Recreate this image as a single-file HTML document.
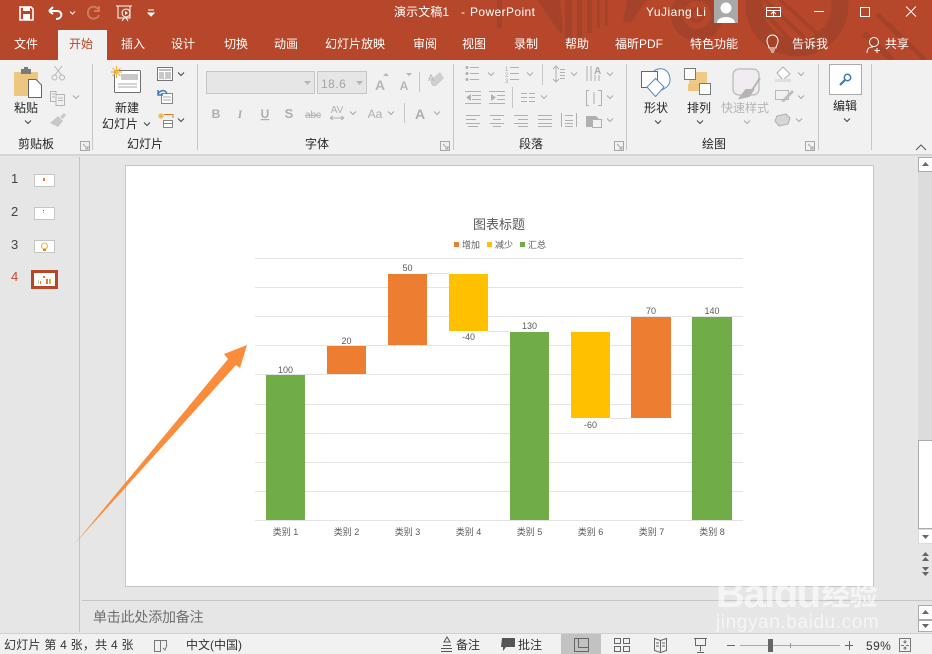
<!DOCTYPE html>
<html lang="zh"><head><meta charset="utf-8"><title>演示文稿1 - PowerPoint</title>
<style>
html,body{margin:0;padding:0;width:932px;height:654px;overflow:hidden;background:#e6e6e6}
svg{display:block}
text{font-family:"Liberation Sans","Noto Sans CJK SC",sans-serif;font-size:12px;fill:#262626}
.w text,text.w{fill:#fff}
.m{text-anchor:middle}
.l{stroke:#b0b0b0;fill:none;stroke-width:1}
.d{stroke:#a5a5a5;fill:none;stroke-width:1}
.c{stroke:#b5b5b5;fill:none;stroke-width:1}
.k{stroke:#444;fill:none;stroke-width:1}
.g{font-size:8px;fill:#595959;text-anchor:middle}
.h{font-size:9px;fill:#595959;text-anchor:middle}
</style></head><body>
<svg width="932" height="654" viewBox="0 0 932 654" xmlns="http://www.w3.org/2000/svg">
<defs>
<g id="cv"><path d="M-3 -1.5L0 1.5L3 -1.5" fill="none" stroke="#aaa" stroke-width="1"/></g>
<g id="cvk"><path d="M-3 -1.5L0 1.5L3 -1.5" fill="none" stroke="#444" stroke-width="1"/></g>
<g id="lau"><path d="M-4.5 -4.5H4.5V4.5H-4.5Z M-2 -2L3 3M3 0V3H0" fill="none" stroke="#a8a8a8" stroke-width="1"/></g>
</defs>
<!-- base -->
<rect width="932" height="654" fill="#e6e6e6"/>
<rect width="932" height="60" fill="#b7472a"/>
<!-- title bar decoration -->
<g fill="#a5432a">
<path d="M497 0h5v28h-5zM537 0h23l3 33h-3zM565 0h7v42h-7zM577 0h5v37h-5zM587 0h5v33h-5zM597 0h3v28h-3zM605 0h3v25h-3zM627 0h20l-16 22h-8z"/>
</g>
<g fill="none" stroke="#a5432a">
<circle cx="697" cy="15" r="20" stroke-width="12"/>
<circle cx="697" cy="15" r="6" stroke-width="4"/>
<circle cx="797" cy="5" r="43" stroke-width="17"/>
<path d="M752 0L800 50M765 0L812 45M780 0L822 38" stroke-width="4"/>
<path d="M864 33L892 60" stroke-width="6"/>
<path d="M877 14L925 60" stroke-width="5"/>
</g>
<!-- ribbon -->
<rect x="0" y="60" width="932" height="94" fill="#f1f1f1"/>
<rect x="0" y="154" width="932" height="2" fill="#d5d5d5"/>
<rect x="58" y="30" width="49" height="30" fill="#f1f1f1"/>
<!-- QAT -->
<g fill="none" stroke="#fff" stroke-width="1.6">
<path d="M20 7H31L33 9V20H20Z"/><rect x="23" y="7" width="7" height="4" fill="#fff" stroke="none"/><rect x="23" y="14" width="7" height="6" fill="#fff" stroke="none"/>
<path d="M49 11L53 7M49 11L53 14M49 11H57C63 11 63 19 56 19" stroke-width="2"/>
<path d="M70 11.5L72.500 14L75 11.5" stroke-width="1"/>
<path d="M99 6V11H94M98 9C93 4 87 8 88 14C89 20 97 20 99 15" stroke="#d07a60" stroke-width="2"/>
<path d="M116 6H132M118 6V18H130V6M122 21L124 18M128 21L126 18" stroke-width="1"/>
<circle cx="126" cy="13" r="4" stroke-width="1"/>
<path d="M125 11L128 13L125 15Z" fill="#fff" stroke="none"/>
<path d="M148 10H154M148 13L151 16L154 13Z" fill="#fff" stroke-width="1"/>
</g>
<text x="394" y="16" style="fill:#fff;letter-spacing:.1px">演示文稿1</text>
<text x="461" y="16" style="fill:#fff">-</text>
<text x="470" y="16" style="fill:#fff;letter-spacing:.4px">PowerPoint</text>
<text x="646" y="16" style="fill:#fff;letter-spacing:.5px">YuJiang Li</text>
<rect x="714" y="0" width="24" height="23" fill="#a9a9a9"/>
<circle cx="726" cy="8" r="5.5" fill="#fff"/><path d="M717 23C717 15 735 15 735 23Z" fill="#fff"/>
<g fill="none" stroke="#fff" stroke-width="1">
<path d="M766.500 7.500H780.500V16.500H766.500ZM766.500 10.500H780.500M773.500 16V12M771 14L773.500 11.500L776 14"/>
<path d="M814 11.500H824"/>
<rect x="860.500" y="7.500" width="9" height="9"/>
<path d="M906 6.500L916 16.500M916 6.500L906 16.500"/>
</g>
<!-- tabs -->
<g class="m">
<text class="m w" x="26" y="48">文件</text>
<text class="m" x="81" y="48" style="fill:#b7472a">开始</text>
<text class="m w" x="133" y="48">插入</text>
<text class="m w" x="183" y="48">设计</text>
<text class="m w" x="236" y="48">切换</text>
<text class="m w" x="286" y="48">动画</text>
<text class="m w" x="355" y="48">幻灯片放映</text>
<text class="m w" x="425" y="48">审阅</text>
<text class="m w" x="474" y="48">视图</text>
<text class="m w" x="526" y="48">录制</text>
<text class="m w" x="577" y="48">帮助</text>
<text class="m w" x="639" y="48">福昕PDF</text>
<text class="m w" x="714" y="48">特色功能</text>
<text class="m w" x="810" y="48">告诉我</text>
<text class="m w" x="897" y="48">共享</text>
</g>
<g fill="none" stroke="#fff" stroke-width="1">
<path d="M769 48C769 45 767 45 767 41C767 33 778 33 778 41C778 45 776 45 776 48ZM770 50H775M771 52H774"/>
<circle cx="874" cy="42" r="4.500"/><path d="M867 53C867 47 871 47 873 47M877 48V53M874.500 50.500H880"/>
</g>
<!-- separators -->
<g stroke="#c6c6c6" stroke-width="1">
<path d="M92.500 64V150M197.500 64V150M453.500 64V150M626.500 64V150M818.500 64V150M871.500 64V150"/>
<path d="M419.500 72V92M404.500 103V123M542.500 64V85M512.500 87V108"/>
</g>
<!-- clipboard -->
<rect x="14" y="72" width="24" height="24" rx="1" fill="#edc77f"/>
<rect x="21" y="69" width="10" height="5" fill="#7a7a7a"/><rect x="24" y="67" width="4" height="3" fill="#7a7a7a"/>
<path d="M28.500 79.500H36L41.500 85V97.500H28.500Z" fill="#fff" stroke="#666"/>
<g class="c" stroke="#b0b0b0" fill="none">
<circle cx="54.500" cy="77.500" r="2.500"/><circle cx="62" cy="77.500" r="2.500"/><path d="M55 75L62 66M61.500 75L54.500 66"/>
<path d="M50.500 91.500H56V101.500H50.500ZM56 94.500H64.500V105.500H56V101.500M58 98H63M58 100.500H63M52 94H55M52 97H55"/>
</g>
<path d="M60 117L64 113L66 115L63 119ZM58 116L63 121L58 127L50 123Z" fill="#c8c8c8"/>
<use href="#cv" x="76" y="97"/>
<text class="m" x="26" y="112">粘贴</text><use href="#cvk" x="28" y="122"/>
<text class="m" x="36" y="148">剪贴板</text><use href="#lau" x="85" y="146"/>
<!-- slides -->
<rect x="114.500" y="70.500" width="26" height="22" rx="1" fill="#fff" stroke="#707070"/>
<rect x="121" y="74" width="17" height="6" fill="#c8c8c8"/>
<path d="M118 84H137M118 87H137" stroke="#aaa"/>
<g stroke="#f2b43d" stroke-width="1.2"><path d="M111 72H122M116.500 66V78M112.500 68L120.500 76M120.500 68L112.500 76"/></g>
<text class="m" x="127" y="112">新建</text><text class="m" x="120" y="128">幻灯片</text><use href="#cvk" x="147" y="124"/>
<text class="m" x="145" y="148">幻灯片</text>
<rect x="157.500" y="67.500" width="15" height="13" fill="#fff" stroke="#777"/><rect x="159" y="69" width="12" height="2" fill="#c0c0c0"/><rect x="159" y="72" width="5" height="7" fill="#c8c8c8"/><rect x="165" y="72" width="6" height="7" fill="#c8c8c8"/>
<use href="#cvk" x="181" y="74"/>
<rect x="161.500" y="93.500" width="11" height="10" fill="#fff" stroke="#888"/><path d="M158 94C161 89 166 90 167 94M158 90V95H163" fill="none" stroke="#3f7ab5" stroke-width="1.500"/><path d="M163 97H171M163 100H171" stroke="#aaa"/>
<g stroke="#f2b43d"><path d="M158 116H164M161 113V119M159 114L163 118M163 114L159 118"/></g>
<path d="M164 114.500H173V118" fill="none" stroke="#e07b30"/><rect x="163.500" y="120.500" width="9" height="7" fill="#fff" stroke="#888"/><path d="M164 123.500H172" stroke="#888"/>
<use href="#cvk" x="181" y="120"/>
<!-- font -->
<rect x="206.500" y="71.500" width="108" height="22" fill="#e6e6e6" stroke="#c6c6c6"/>
<rect x="317.500" y="71.500" width="49" height="22" fill="#e6e6e6" stroke="#c6c6c6"/>
<path d="M304 81L307.500 85L311 81ZM356 81L359.500 85L363 81Z" fill="#b5b5b5"/>
<text x="321" y="88" style="fill:#a5a5a5;font-size:12px;letter-spacing:.5px">18.6</text>
<g style="font-weight:bold">
<text class="m" x="380" y="90" style="fill:#b5b5b5;font-size:14px">A</text>
<text class="m" x="404" y="90" style="fill:#b5b5b5;font-size:12px">A</text>
<text class="m" x="216" y="118" style="fill:#aeaeae;font-size:12px;font-weight:bold">B</text>
<text class="m" x="240" y="118" style="fill:#aeaeae;font-size:12px;font-style:italic;font-family:'Liberation Serif',serif">I</text>
<text class="m" x="265" y="118" style="fill:#aeaeae;font-size:12px;font-weight:bold;text-decoration:underline">U</text>
<text class="m" x="289" y="118" style="fill:#aeaeae;font-size:13px;font-weight:bold">S</text>
<text class="m" x="313" y="118" style="fill:#aeaeae;font-size:10px;text-decoration:line-through;font-weight:normal">abc</text>
<text class="m" x="337" y="113" style="fill:#aeaeae;font-size:10px;font-weight:normal">AV</text>
<text class="m" x="375" y="118" style="fill:#aeaeae;font-size:12px;font-weight:normal">Aa</text>
<text class="m" x="420" y="119" style="fill:#aeaeae;font-size:14px">A</text>
</g>
<path d="M383 76L386 73L389 76ZM406 73L409 76L412 73Z" fill="#b5b5b5"/>
<path d="M330 118H344M330 118L333 116M330 118L333 120M344 118L341 116M344 118L341 120" stroke="#aeaeae" fill="none"/>
<path d="M430 80L440 72L444 78L436 86L432 86Z" fill="#cfcfcf"/><text x="428" y="81" style="fill:#b0b0b0;font-size:9px">A</text>
<g><use href="#cv" x="353" y="113"/><use href="#cv" x="391" y="113"/><use href="#cv" x="437" y="113"/></g>
<text class="m" x="317" y="148">字体</text><use href="#lau" x="445" y="146"/>
<!-- paragraph -->
<g stroke="#b0b0b0" fill="none">
<path d="M470 67.500H479M470 73.500H479M470 79.500H479"/>
<path d="M510 67.500H519M510 73.500H519M510 79.500H519"/>
<path d="M556 67V81M553 69L556 66L559 69M553 79L556 82L559 79M560 69.500H565M560 72.500H565M560 75.500H565M560 78.500H565"/>
<path d="M587 66V81M591 66V81M595 75V81M599 75V81"/>
<path d="M465 91.500H481M472 95.500H481M472 99.500H481M465 103.500H481M489 91.500H505M497 95.500H505M497 99.500H505M489 103.500H505"/>
<path d="M521 93.500H527M529 93.500H535M521 97.500H527M529 97.500H535M521 101.500H527M529 101.500H535"/>
<path d="M589 90.500H586.500V105.500H589M598 90.500H601.500V105.500H598M594 92V104"/>
<path d="M466 115.500H480M466 119.500H476M466 123.500H480M468 126.500H478"/>
<path d="M490 115.500H504M493 119.500H501M490 123.500H504M493 126.500H501"/>
<path d="M514 115.500H528M518 119.500H528M514 123.500H528M518 126.500H528"/>
<path d="M538 115.500H552M538 119.500H552M538 123.500H552M538 126.500H552"/>
<path d="M561.500 113V127M576.500 113V127M565 115.500H573M565 120.500H573M565 123.500H573M565 126.500H573"/>
</g>
<g fill="#b0b0b0">
<circle cx="467" cy="67.500" r="1.500"/><circle cx="467" cy="73.500" r="1.500"/><circle cx="467" cy="79.500" r="1.500"/>
<path d="M466 97.500L471 94V101ZM496 97.500L491 94V101Z"/>
<path d="M586 116H596L601 121H592V127H586Z"/>
</g>
<rect x="592.500" y="119.500" width="9" height="8" fill="#f1f1f1" stroke="#b0b0b0"/>
<text x="505" y="71" style="fill:#aaa;font-size:6px">1</text><text x="505" y="77" style="fill:#aaa;font-size:6px">2</text><text x="505" y="83" style="fill:#aaa;font-size:6px">3</text>
<text x="594" y="74" style="fill:#aaa;font-size:10px;font-weight:bold">A</text>
<use href="#cv" x="491" y="74"/><use href="#cv" x="530" y="74"/><use href="#cv" x="574" y="74"/><use href="#cv" x="610" y="74"/>
<use href="#cv" x="544" y="97"/><use href="#cv" x="610" y="97"/><use href="#cv" x="610" y="120"/>
<text class="m" x="531" y="148">段落</text><use href="#lau" x="619" y="146"/>
<!-- drawing -->
<path d="M650 80C650 66 670 64 670 80C670 86 665 88 662 90" fill="#fff" stroke="#5a87bb" stroke-width="1"/>
<rect x="641.500" y="71.500" width="16" height="16" fill="#fff" stroke="#3f6fa8"/>
<path d="M655.500 78.500L664 87L655.500 96.500L647 87Z" fill="#fff" stroke="#5a87bb"/>
<text class="m" x="656" y="112">形状</text><use href="#cvk" x="658" y="122"/>
<rect x="689" y="72" width="18" height="18" fill="#edc77f" opacity=".95"/>
<rect x="684.500" y="68.500" width="11" height="11" fill="#fff" stroke="#7a7a7a"/>
<rect x="688" y="84" width="11" height="7" fill="#edc77f"/>
<rect x="699.500" y="83.500" width="11" height="11" fill="#fff" stroke="#7a7a7a"/>
<text class="m" x="699" y="112">排列</text><use href="#cvk" x="700" y="122"/>
<rect x="733" y="69" width="26" height="26" rx="6" fill="#f1ecf1" stroke="#c2c2c2" stroke-width="1.500"/>
<path d="M760 78L752 90M740 98L746 90L753 90L749 96Z" stroke="#b5b5b5" stroke-width="2" fill="#b5b5b5"/>
<text class="m" x="745" y="112" style="fill:#b5b5b5">快速样式</text><use href="#cv" x="747" y="122"/>
<path d="M777 73L783 67L790 74L783 80Z" fill="#fff" stroke="#b0b0b0"/><rect x="775" y="79" width="16" height="3" fill="#e2dede"/>
<rect x="775.500" y="90.500" width="13" height="9" fill="none" stroke="#b8b8b8"/><path d="M781 101L792 90L794 92L784 102Z" fill="#bdbdbd"/>
<path d="M777 116L786 114L790 118L788 124L779 126L775 121Z" fill="#d6d6d6" stroke="#aeaeae"/>
<use href="#cv" x="801" y="74"/><use href="#cv" x="801" y="97"/><use href="#cv" x="799" y="120"/>
<text class="m" x="714" y="148">绘图</text><use href="#lau" x="810" y="146"/>
<!-- edit -->
<rect x="829.500" y="64.500" width="32" height="30" fill="#fff" stroke="#ababab"/>
<circle cx="847.500" cy="77.500" r="3.200" fill="none" stroke="#3f7ab5" stroke-width="1.500"/><path d="M845 80L840 85" stroke="#3f7ab5" stroke-width="2.200"/>
<text class="m" x="845" y="110">编辑</text><use href="#cvk" x="847" y="120"/>
<path d="M916 150L921 145L926 150" fill="none" stroke="#555"/>
<!-- panels -->
<path d="M79.500 157V632" stroke="#c2c2c2"/>
<path d="M82 600.500H932" stroke="#c6c6c6"/>
<path d="M0 633.500H932" stroke="#d0d0d0"/>
<rect x="0" y="634" width="932" height="20" fill="#f1f1f1"/>
<!-- thumbs -->
<text x="11" y="183" style="fill:#444;font-size:13px">1</text>
<text x="11" y="216" style="fill:#444;font-size:13px">2</text>
<text x="11" y="249" style="fill:#444;font-size:13px">3</text>
<text x="11" y="281" style="fill:#c8472a;font-size:13px">4</text>
<rect x="34.500" y="174.500" width="20" height="12" fill="#fff" stroke="#c6c6c6"/><rect x="43" y="178" width="2" height="3" fill="#e8792d"/>
<rect x="34.500" y="207.500" width="20" height="12" fill="#fff" stroke="#c6c6c6"/><rect x="43" y="210" width="1" height="1" fill="#555"/><rect x="43" y="212" width="1" height="1" fill="#aaa"/>
<rect x="34.500" y="240.500" width="20" height="12" fill="#fff" stroke="#c6c6c6"/><circle cx="44.500" cy="246" r="3" fill="none" stroke="#f0b040"/><rect x="43" y="249" width="3" height="2" fill="#e8792d"/>
<rect x="31" y="270" width="27" height="19" fill="#b7472a"/><rect x="34" y="273" width="21" height="13" fill="#fff"/>
<path d="M40 281h1v3h-1zM43 276h2v2h-2z" fill="#e8792d"/><path d="M46 279h2v5h-2z" fill="#e8792d"/><path d="M49 279h2v5h-2z" fill="#e6b020"/><path d="M38 280h1v4h-1z" fill="#b8d8a8"/>
<!-- slide -->
<rect x="125.500" y="165.500" width="748" height="421" fill="#fff" stroke="#c6c6c6"/>
<!-- chart -->
<g stroke="#e4e4e4" stroke-width="1">
<path d="M255 258.500H743M255 287.500H743M255 316.500H743M255 345.500H743M255 374.500H743M255 404.500H743M255 433.500H743M255 462.500H743M255 491.500H743M255 520.500H743"/>
</g>
<path d="M427 273.500H449M488 331.500H510M610 418.500H631M671 316.500H692M305 374.500H327M366 345.500H388" stroke="#e2e2e2"/>
<g fill="#70ad47"><rect x="266" y="375" width="39" height="145"/><rect x="510" y="332" width="39" height="188"/><rect x="692" y="317" width="40" height="203"/></g>
<g fill="#ed7d31"><rect x="327" y="346" width="39" height="28"/><rect x="388" y="274" width="39" height="71"/><rect x="631" y="317" width="40" height="101"/></g>
<g fill="#ffc000"><rect x="449" y="274" width="39" height="57"/><rect x="571" y="332" width="39" height="86"/></g>
<text class="m" x="499" y="229" style="fill:#595959;font-size:13px">图表标题</text>
<rect x="454" y="242" width="5" height="5" fill="#ed7d31"/><text x="462" y="248" style="fill:#595959;font-size:9px">增加</text>
<rect x="487" y="242" width="5" height="5" fill="#ffc000"/><text x="495" y="248" style="fill:#595959;font-size:9px">减少</text>
<rect x="520" y="242" width="5" height="5" fill="#70ad47"/><text x="528" y="248" style="fill:#595959;font-size:9px">汇总</text>
<g>
<text class="h" x="285.500" y="373">100</text><text class="h" x="346.500" y="344">20</text><text class="h" x="407.500" y="271">50</text><text class="h" x="468.500" y="340">-40</text>
<text class="h" x="529.500" y="329">130</text><text class="h" x="590.500" y="428">-60</text><text class="h" x="651" y="314">70</text><text class="h" x="712" y="314">140</text>
<text class="h" x="285.500" y="535">类别 1</text><text class="h" x="346.500" y="535">类别 2</text><text class="h" x="407.500" y="535">类别 3</text><text class="h" x="468.500" y="535">类别 4</text>
<text class="h" x="529.500" y="535">类别 5</text><text class="h" x="590.500" y="535">类别 6</text><text class="h" x="651.500" y="535">类别 7</text><text class="h" x="712" y="535">类别 8</text>
</g>
<!-- arrow -->
<polygon points="74.500,544 228,359 224,354 247,345 240,368 236,365" fill="#fb8c3b"/>
<!-- notes -->
<text x="93" y="622" style="fill:#6f6f6f;font-size:14px;letter-spacing:-.2px">单击此处添加备注</text>
<!-- scrollbars -->
<rect x="918" y="157" width="14" height="283" fill="#dcdcdc"/>
<rect x="918.500" y="157.500" width="14" height="14" fill="#fff" stroke="#ababab"/>
<path d="M922 166L925.500 162L929 166Z" fill="#666"/>
<rect x="918.500" y="440.500" width="14" height="88" fill="#fff" stroke="#ababab"/>
<rect x="918.500" y="529.500" width="14" height="14" fill="#fff" stroke="#dadada"/>
<path d="M922 535L925.500 539L929 535Z" fill="#666"/>
<path d="M922 556L925.500 552L929 556ZM922 561L925.500 557L929 561Z" fill="#666"/>
<path d="M922 567L925.500 571L929 567ZM922 572L925.500 576L929 572Z" fill="#666"/>
<rect x="918.500" y="605.500" width="14" height="14" fill="#fff" stroke="#ababab"/>
<path d="M922 614L925.500 610L929 614Z" fill="#666"/>
<rect x="918.500" y="620.500" width="14" height="11" fill="#fff" stroke="#ababab"/>
<path d="M922 624L925.500 628L929 624Z" fill="#666"/>
<!-- status -->
<text x="4" y="649" style="font-size:12px;fill:#333;letter-spacing:.25px">幻灯片 第 4 张，共 4 张</text>
<path d="M154.500 640.500H160.500V651.500H154.500ZM160.500 640.500H166.500V646M163 648L165 650L167 645" fill="none" stroke="#777"/>
<text x="186" y="649" style="fill:#333">中文(中国)</text>
<path d="M443 645.500H451M441 648.500H452M441 651.500H452M447 637L444 642H450Z" fill="none" stroke="#555"/>
<text x="456" y="649" style="fill:#333">备注</text>
<path d="M502 638H515V647H506L503 651V647H501Z" fill="#555"/>
<text x="518" y="649" style="fill:#333">批注</text>
<rect x="561" y="634" width="40" height="20" fill="#c2c2c2"/>
<g fill="none" stroke="#666">
<path d="M574.500 638.500H588.500V651.500H574.500ZM578.500 638.500V647.500H588.500"/>
<path d="M614.500 638.500H620.500V643.500H614.500ZM623.500 638.500H629.500V643.500H623.500ZM614.500 646.500H620.500V651.500H614.500ZM623.500 646.500H629.500V651.500H623.500Z"/>
<path d="M654.500 638.500L660.500 640.500L666.500 638.500V650.500L660.500 652.500L654.500 650.500ZM660.500 640.500V652.500M656 643H659M656 646H659M662 643H665M662 646H665"/>
<path d="M694 638.500H707M695.500 638.500V645.500H705.500V638.500M700.500 645.500V651.500M697 652.500H704"/>
<path d="M727 645.500H735M845 645.500H853M849.500 641V650"/>
</g>
<path d="M740 645.500H840" stroke="#a8a8a8"/><path d="M790.500 643V648" stroke="#999"/>
<rect x="768" y="639" width="5" height="13" fill="#666"/>
<text x="866" y="650" style="fill:#333;font-size:12px;letter-spacing:.4px">59%</text>
<path d="M899.500 638.500H910.500V651.500H899.500ZM905 640V643M903.500 641.500L905 643L906.500 641.500M905 650V647M903.500 648.500L905 647L906.500 648.500M901 645.500H904M906 645.500H909" fill="none" stroke="#777"/>
<!-- watermark -->
<g opacity=".6">
<text x="716" y="607" style="fill:#fff;font-size:40px;font-weight:bold;letter-spacing:-1.500px">Baidu</text>
<text x="822" y="605" style="fill:#fff;font-size:28px;font-weight:bold;letter-spacing:-.5px">经验</text>
<text x="716" y="628" style="fill:#fff;font-size:19px;letter-spacing:.6px">jingyan.baidu.com</text>
<g fill="#fff"><ellipse cx="787" cy="574" rx="5" ry="7"/><ellipse cx="804" cy="572" rx="6" ry="7"/><ellipse cx="817" cy="578" rx="5" ry="6"/><ellipse cx="781" cy="585" rx="4" ry="5"/></g>
</g>
</svg>
</body></html>
